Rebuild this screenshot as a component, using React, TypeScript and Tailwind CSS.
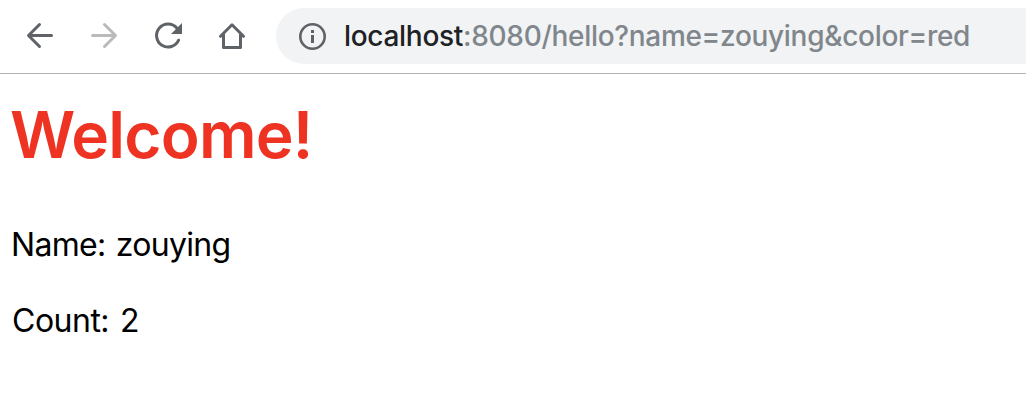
function BackIcon() {
  return (
    <svg width="28" height="28" viewBox="0 0 28 28" fill="none" stroke="#5f6368" strokeWidth="3" strokeLinecap="round" strokeLinejoin="round">
      <path d="M25.5 13.5H3M13.5 2.5 2.5 13.5 13.5 24.5" />
    </svg>
  );
}

function ForwardIcon() {
  return (
    <svg width="28" height="28" viewBox="0 0 28 28" fill="none" stroke="#bababa" strokeWidth="3" strokeLinecap="round" strokeLinejoin="round">
      <path d="M2.5 13.5H25M14.5 2.5 25.5 13.5 14.5 24.5" />
    </svg>
  );
}

function ReloadIcon() {
  return (
    <svg width="28" height="28" viewBox="0 0 28 28" fill="none">
      <path d="M22.8 6A11.5 11.5 0 1 0 24.6 18.2" stroke="#5f6368" strokeWidth="3" strokeLinecap="round" />
      <path d="M28 1V12H17Z" fill="#5f6368" />
    </svg>
  );
}

function HomeIcon() {
  return (
    <svg width="28" height="28" viewBox="0 0 28 28" fill="none" stroke="#5f6368" strokeWidth="3" strokeLinecap="round" strokeLinejoin="round">
      <path d="M2.5 14.3 14 2.8 25.5 14.3M5.5 12.5V25.5H22.5V12.5" />
    </svg>
  );
}

function InfoIcon() {
  return (
    <svg className="shrink-0" width="28" height="28" viewBox="0 0 28 28" fill="none">
      <circle cx="14.5" cy="14.5" r="12.2" stroke="#5f6368" strokeWidth="2.6" />
      <path d="M13 8h3v3h-3zM13 13h3v8h-3z" fill="#5f6368" />
    </svg>
  );
}

export default function App() {
  return (
    <div className="h-[404px] w-[1026px] overflow-hidden bg-white font-[Inter,sans-serif]">
      <header className="flex h-[74px] items-start border-b border-[#b3b3b3] pt-2">
        <nav className="flex h-14 items-center gap-9 pl-[26px]">
          <button aria-label="Back"><BackIcon /></button>
          <button aria-label="Forward"><ForwardIcon /></button>
          <button aria-label="Reload"><ReloadIcon /></button>
          <button aria-label="Home"><HomeIcon /></button>
        </nav>
        <div className="ml-[30px] flex h-14 flex-1 items-center rounded-l-full bg-[#f1f3f4] pl-[22px]">
          <InfoIcon />
          <span className="ml-[18px] whitespace-nowrap text-[28px] leading-9 font-[450] tracking-[-0.3px] text-[#80868b]">
            <span className="text-[#202124]">localhost</span>:8080/hello?name=zouying&amp;color=red
          </span>
        </div>
      </header>
      <main className="px-3 pt-[21px]">
        <h1 className="-ml-0.5 text-[64px] leading-[80px] font-semibold tracking-[-0.8px] text-[#ee3322]">Welcome!</h1>
        <p className="-ml-px mt-[51px] text-[32px] leading-[38px] tracking-[-0.7px] text-black [word-spacing:2px]">Name: zouying</p>
        <p className="mt-[38px] text-[32px] leading-[38px] tracking-[-0.5px] text-black [word-spacing:2.5px]">Count: 2</p>
      </main>
    </div>
  );
}
